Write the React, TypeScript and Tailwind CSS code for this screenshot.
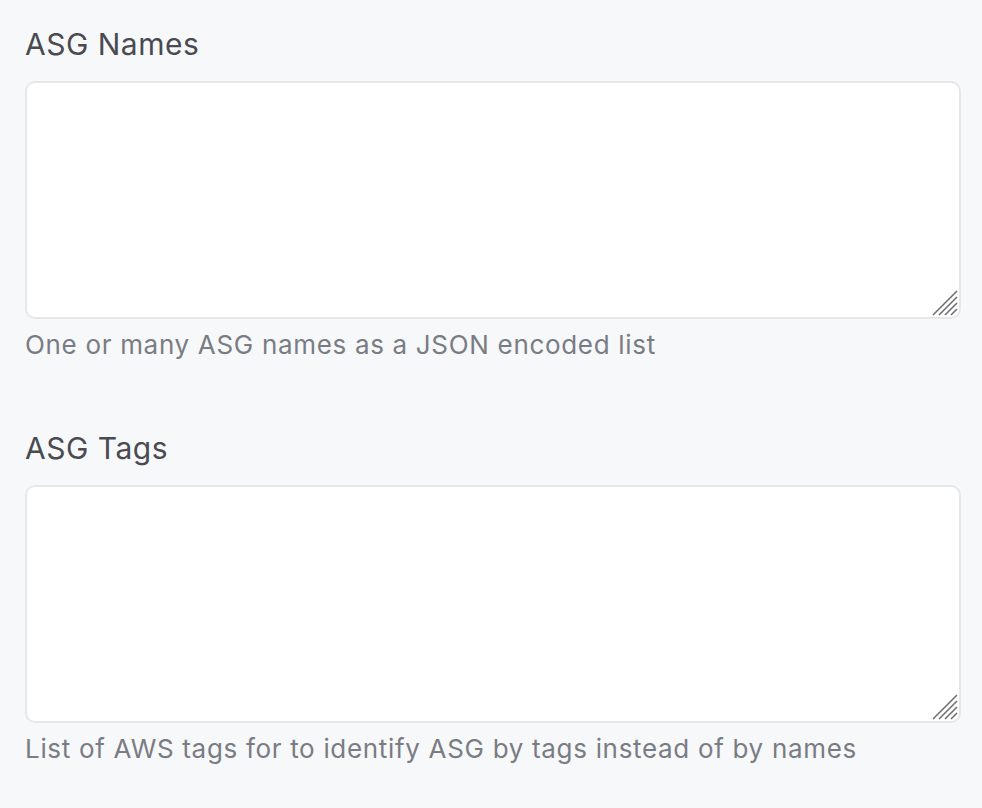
import React from "react";

function Grip() {
  return (
    <svg
      className="pointer-events-none absolute right-[3px] bottom-[3px]"
      width="26"
      height="26"
      viewBox="0 0 26 26"
    >
      <g stroke="#6f6f6f" strokeWidth="1.6" strokeLinecap="butt">
        <line x1="1" y1="25" x2="25" y2="1" />
        <line x1="7" y1="25" x2="25" y2="7" />
        <line x1="13" y1="25" x2="25" y2="13" />
        <line x1="19" y1="25" x2="25" y2="19" />
      </g>
    </svg>
  );
}

function Field({ label, help }: { label: string; help: string }) {
  return (
    <div className="flex flex-col">
      <label className="text-[30px] leading-[45px] tracking-[0.5px] text-[#4a4b51]">{label}</label>
      <div className="relative mt-[14px]">
        <textarea className="block h-[238px] w-full resize-none rounded-[10px] border-2 border-[#e6e7eb] bg-white outline-none" />
        <Grip />
      </div>
      <p className="mt-[6px] text-[26px] leading-[39px] tracking-[0.68px] text-[#7a7c84]">{help}</p>
    </div>
  );
}

export default function App() {
  return (
    <div
      className="min-h-[808px] w-full bg-[#f7f8fa] pl-[25px] pr-[21px] pt-[22px]"
      style={{ fontFamily: "Inter, 'Liberation Sans', sans-serif" }}
    >
      <div className="flex flex-col gap-[62px]">
        <Field label="ASG Names" help="One or many ASG names as a JSON encoded list" />
        <Field
          label="ASG Tags"
          help="List of AWS tags for to identify ASG by tags instead of by names"
        />
      </div>
    </div>
  );
}
